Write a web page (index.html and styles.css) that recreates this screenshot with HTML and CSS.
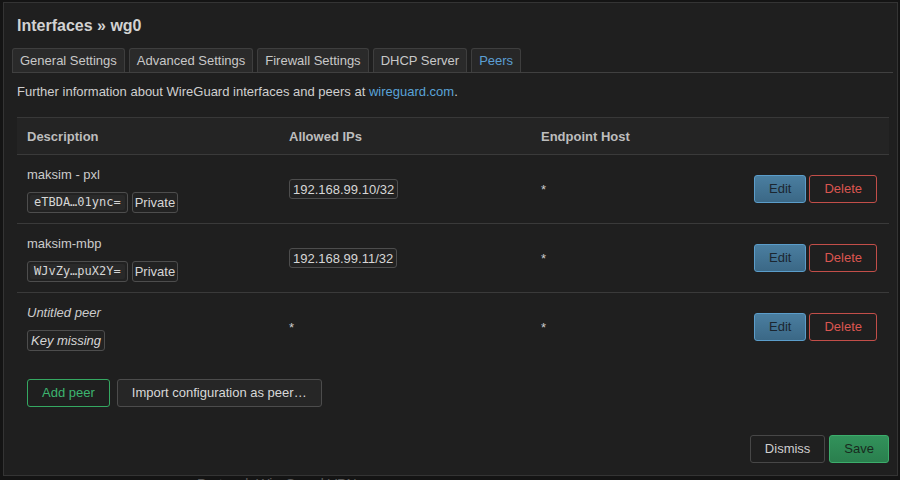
FILE: index.html
```html
<!DOCTYPE html>
<html>
<head>
<meta charset="utf-8">
<link rel="stylesheet" href="styles.css">
</head>
<body>
<div class="page">
  <div class="behind">Protocol: WireGuard VPN</div>
</div>
<div class="modal">
  <div class="modal-body">
    <h4 class="title">Interfaces » wg0</h4>
    <ul class="tabs">
      <li class="tab">General Settings</li>
      <li class="tab">Advanced Settings</li>
      <li class="tab">Firewall Settings</li>
      <li class="tab">DHCP Server</li>
      <li class="tab active">Peers</li>
    </ul>
    <p class="info">Further information about WireGuard interfaces and peers at <a class="link">wireguard.com</a>.</p>
    <div class="table">
      <div class="tr head">
        <div class="th">Description</div>
        <div class="th">Allowed IPs</div>
        <div class="th">Endpoint Host</div>
        <div class="th"></div>
      </div>
      <div class="tr">
        <div class="td desc">
          <div class="name">maksim - pxl</div>
          <div class="badges"><span class="badge key"><code>eTBDA…01ync=</code></span><span class="badge">Private</span></div>
        </div>
        <div class="td"><span class="badge ip">192.168.99.10/32</span></div>
        <div class="td">*</div>
        <div class="td act"><button class="btn edit">Edit</button><button class="btn del">Delete</button></div>
      </div>
      <div class="tr">
        <div class="td desc">
          <div class="name">maksim-mbp</div>
          <div class="badges"><span class="badge key"><code>WJvZy…puX2Y=</code></span><span class="badge">Private</span></div>
        </div>
        <div class="td"><span class="badge ip">192.168.99.11/32</span></div>
        <div class="td">*</div>
        <div class="td act"><button class="btn edit">Edit</button><button class="btn del">Delete</button></div>
      </div>
      <div class="tr last">
        <div class="td desc">
          <div class="name"><em>Untitled peer</em></div>
          <div class="badges"><span class="badge missing"><em>Key missing</em></span></div>
        </div>
        <div class="td">*</div>
        <div class="td">*</div>
        <div class="td act"><button class="btn edit">Edit</button><button class="btn del">Delete</button></div>
      </div>
    </div>
    <div class="actions">
      <button class="btn add">Add peer</button>
      <button class="btn plain">Import configuration as peer…</button>
    </div>
  </div>
  <div class="footer">
    <button class="btn dismiss">Dismiss</button>
    <button class="btn save">Save</button>
  </div>
</div>
</body>
</html>
```

FILE: styles.css
```css
html, body {
  margin: 0;
  padding: 0;
}
body {
  width: 900px;
  height: 480px;
  overflow: hidden;
  background: #141414;
  font-family: "Liberation Sans", Arial, sans-serif;
  font-size: 13px;
  color: #cccccc;
  position: relative;
}
.page {
  padding: 474px 0 0 197px;
}
.behind {
  font-size: 14px;
  color: #5a5a5a;
  line-height: 20px;
}
.modal {
  position: absolute;
  top: 2px;
  left: 3px;
  width: 895px;
  height: 474px;
  box-sizing: border-box;
  background: #1f1f1f;
  border: 1px solid #343434;
  padding: 13px 8px 12px 13px;
  display: flex;
  flex-direction: column;
}
.modal-body {
  flex: 1;
}
.title {
  margin: 0;
  font-size: 16px;
  line-height: 20px;
  font-weight: bold;
  color: #d2d2d2;
}
.tabs {
  list-style: none;
  margin: 12px -4px 0 -5px;
  padding: 0;
  display: flex;
  gap: 4px;
  border-bottom: 1px solid #404040;
}
.tab {
  height: 23px;
  line-height: 24px;
  padding: 0 7px;
  background: #2a2a2a;
  border: 1px solid #3e3e3e;
  border-bottom: none;
  border-radius: 3px 3px 0 0;
  color: #c8c8c8;
}
.tab.active {
  color: #5c9fd4;
  background: #272727;
}
.info {
  margin: 10px 0 0;
  line-height: 18px;
  color: #cfcfcf;
}
.link {
  color: #5aa3d8;
}
.table {
  margin-top: 16px;
  border-top: 1px solid #383838;
}
.tr {
  display: grid;
  grid-template-columns: 262px 252px 1fr auto;
  align-items: center;
  border-bottom: 1px solid #3a3a3a;
}
.tr.last {
  border-bottom: none;
}
.tr.head {
  height: 36px;
  background: #242424;
}
.th {
  padding: 0 10px;
  font-weight: bold;
  color: #bdbdbd;
}
.td {
  padding: 0 10px;
  color: #cccccc;
}
.td.desc {
  padding: 11px 10px 10px;
}
.name {
  height: 18px;
  line-height: 18px;
}
.badges {
  margin-top: 8px;
  height: 21px;
  display: flex;
  gap: 4px;
}
.badge {
  display: inline-flex;
  align-items: center;
  box-sizing: border-box;
  height: 20px;
  border: 1px solid #4d4d4d;
  border-radius: 3px;
  background: #222222;
  padding: 0 2px;
  color: #d6d6d6;
}
.badges .badge {
  height: 21px;
}
.badge.ip {
  padding: 0 3px;
}
.badge.key {
  padding: 0 2px;
}
.badge.key code {
  font-family: "DejaVu Sans Mono", "Liberation Mono", monospace;
  font-size: 12px;
  line-height: 15px;
  background: #292929;
  padding: 0 4px;
  border-radius: 2px;
  color: #d6d6d6;
}
.badge.missing {
  padding: 0 3px;
}
.td.act {
  padding: 0 12px 0 10px;
  display: flex;
  gap: 3px;
}
.btn {
  font-family: "Liberation Sans", Arial, sans-serif;
  font-size: 13px;
  height: 28px;
  line-height: 26px;
  padding: 0 14px;
  border-radius: 3px;
  border: 1px solid #4a4a4a;
  background: #1f1f1f;
  color: #cccccc;
  margin: 0;
}
.btn.edit {
  background: linear-gradient(#4a7ea0, #3b6886);
  border-color: #5b9dca;
  color: #1b2630;
}
.btn.del {
  background: #1f1f1f;
  border-color: #c24e49;
  color: #da5650;
}
.actions {
  margin-top: 18px;
  display: flex;
  gap: 7px;
  padding-left: 10px;
}
.btn.add {
  border-color: #35a862;
  color: #3db56f;
  background: #1f1f1f;
}
.btn.plain {
  background: #262626;
  border-color: #4c4c4c;
  color: #d8d8d8;
}
.footer {
  display: flex;
  justify-content: flex-end;
  gap: 4px;
}
.btn.dismiss {
  background: #1f1f1f;
  border-color: #474747;
  color: #cfcfcf;
}
.btn.save {
  background: linear-gradient(#32925b, #2a7f4e);
  border-color: #3cad6b;
  color: #182a1e;
}
```
